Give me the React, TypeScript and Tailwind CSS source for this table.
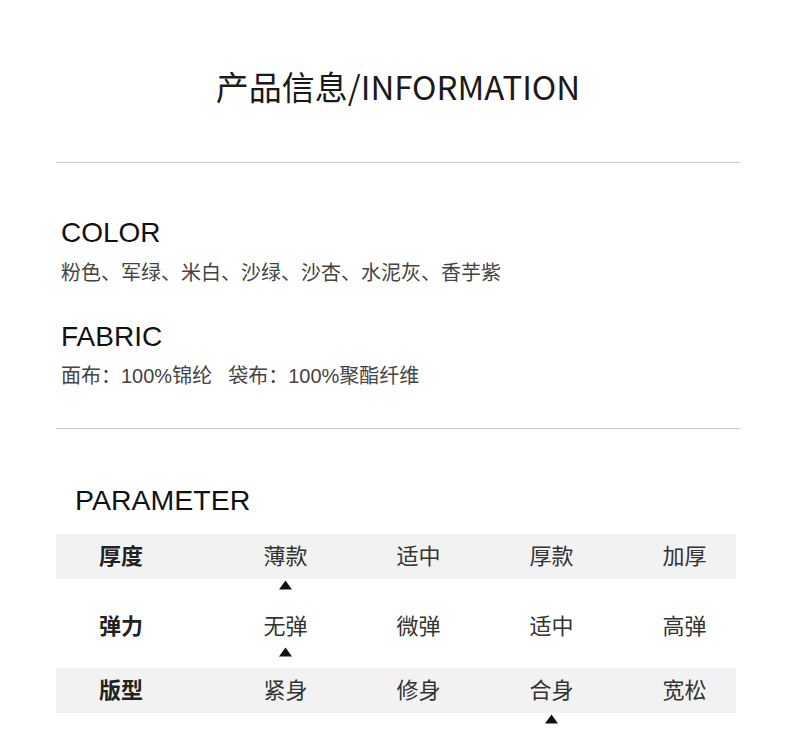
import React from "react";

const rows = [
  { label: "厚度", values: ["薄款", "适中", "厚款", "加厚"], mark: 0, shaded: true },
  { label: "弹力", values: ["无弹", "微弹", "适中", "高弹"], mark: 0, shaded: false },
  { label: "版型", values: ["紧身", "修身", "合身", "宽松"], mark: 2, shaded: true },
];

const Triangle = () => (
  <svg width="13" height="10" viewBox="0 0 13 10" className="block">
    <polygon points="6.5,0.5 13,9.5 0,9.5" fill="#111" />
  </svg>
);

export default function App() {
  return (
    <div className="w-[790px] min-h-[750px] bg-white font-['Liberation_Sans','Noto_Sans_CJK_SC',sans-serif]">
      <div className="ml-[56px] w-[684px]">
        {/* title */}
        <div className="pt-[67px] text-center text-[33px] leading-[38px] text-[#1a1a1a] font-['Noto_Sans_CJK_SC',sans-serif]">
          产品信息/INFORMATION
        </div>
        <div className="mt-[57px] h-px bg-[#c8c8c8]" />

        {/* color + fabric */}
        <div className="pl-[5px]">
          <div className="mt-[56px] text-[28px] leading-[28px] text-[#111]">COLOR</div>
          <div className="mt-[15px] text-[20px] leading-[22px] text-[#444]">
            粉色、军绿、米白、沙绿、沙杏、水泥灰、香芋紫
          </div>
          <div className="mt-[39px] text-[28px] leading-[28px] text-[#111]">FABRIC</div>
          <div className="mt-[14px] text-[20px] leading-[22px] text-[#444]">
            面布：100%锦纶<span className="ml-[16px]">袋布：100%聚酯纤维</span>
          </div>
        </div>
        <div className="mt-[41px] h-px bg-[#c8c8c8]" />

        {/* parameter */}
        <div className="mt-[57px] pl-[19px] text-[28.5px] leading-[28px] text-[#111]">PARAMETER</div>

        <div className="mt-[20px] w-[680px] font-['Noto_Sans_CJK_SC',sans-serif]">
          {rows.map((row, i) => (
            <div key={i}>
              <div
                className={
                  "grid h-[45px] grid-cols-[163px_133px_133px_133px_118px] items-center " +
                  (row.shaded ? "bg-[#f2f2f2] pb-[5px]" : "pt-[1px]")
                }
              >
                <div className="pl-[43px] text-[22px] font-bold text-[#222]">{row.label}</div>
                {row.values.map((v, j) => (
                  <div
                    key={j}
                    className={"text-center text-[22px] text-[#333] " + (j === 3 ? "pl-[15px]" : "")}
                  >
                    {v}
                  </div>
                ))}
              </div>
              <div className="grid h-[22px] grid-cols-[163px_133px_133px_133px_118px]">
                <div />
                {[0, 1, 2, 3].map((j) => (
                  <div key={j} className="flex justify-center pt-[1px]">
                    {row.mark === j ? <Triangle /> : null}
                  </div>
                ))}
              </div>
            </div>
          ))}
        </div>
      </div>
    </div>
  );
}
